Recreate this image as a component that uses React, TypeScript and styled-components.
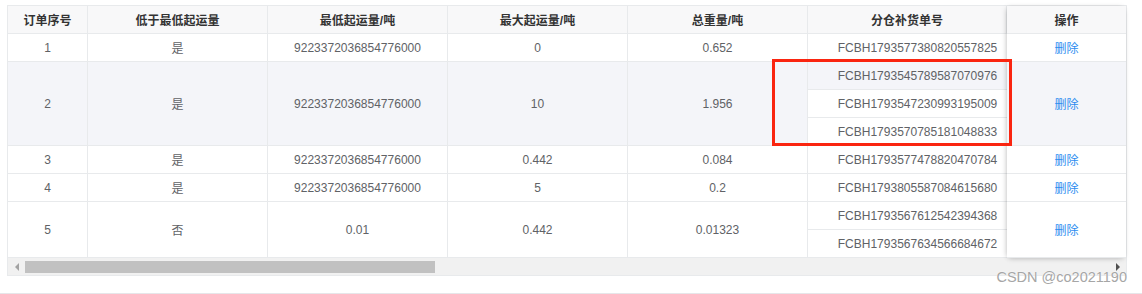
import React from "react";
import styled, { createGlobalStyle } from "styled-components";

const GlobalStyle = createGlobalStyle`
  body {
    margin: 0;
    background: #fff;
    font-family: "Liberation Sans", Arial, "Noto Sans CJK SC", sans-serif;
  }
`;

type Order = {
  no: string;
  below: string;
  min: string;
  max: string;
  total: string;
  subs: string[];
  hover?: boolean;
};

const ROW = 28;
const COLS = [80, 180, 180, 180, 180, 199];
const HEADS = ["订单序号", "低于最低起运量", "最低起运量/吨", "最大起运量/吨", "总重量/吨", "分仓补货单号"];

const orders: Order[] = [
  { no: "1", below: "是", min: "9223372036854776000", max: "0", total: "0.652", subs: ["FCBH1793577380820557825"] },
  {
    no: "2", below: "是", min: "9223372036854776000", max: "10", total: "1.956", hover: true,
    subs: ["FCBH1793545789587070976", "FCBH1793547230993195009", "FCBH1793570785181048833"],
  },
  { no: "3", below: "是", min: "9223372036854776000", max: "0.442", total: "0.084", subs: ["FCBH1793577478820470784"] },
  { no: "4", below: "是", min: "9223372036854776000", max: "5", total: "0.2", subs: ["FCBH1793805587084615680"] },
  {
    no: "5", below: "否", min: "0.01", max: "0.442", total: "0.01323",
    subs: ["FCBH1793567612542394368", "FCBH1793567634566684672"],
  },
];

const App: React.FC = () => {
  return <>
    <GlobalStyle />
    <Page>
      <Frame>
        <Body>
          <Scroller>
            <Row $height={ROW} $head>
              {HEADS.map((h, i) => (
                <Cell key={h} $width={COLS[i]} $head>{h}</Cell>
              ))}
            </Row>
            {orders.map((o) => (
              <Row key={o.no} $height={ROW * o.subs.length} $hover={o.hover}>
                <Cell $width={COLS[0]}>{o.no}</Cell>
                <Cell $width={COLS[1]}>{o.below}</Cell>
                <Cell $width={COLS[2]}>{o.min}</Cell>
                <Cell $width={COLS[3]}>{o.max}</Cell>
                <Cell $width={COLS[4]}>{o.total}</Cell>
                <SubCell $width={COLS[5]}>
                  {o.subs.map((s, i) => (
                    <SubRow key={s} $last={i === o.subs.length - 1} $hover={o.hover && i === 0}>{s}</SubRow>
                  ))}
                </SubCell>
              </Row>
            ))}
          </Scroller>
          <FixedCol>
            <Row $height={ROW} $head>
              <Cell $width={119} $head $noRight>操作</Cell>
            </Row>
            {orders.map((o) => (
              <Row key={o.no} $height={ROW * o.subs.length} $hover={o.hover}>
                <Cell $width={119} $noRight><Action>删除</Action></Cell>
              </Row>
            ))}
          </FixedCol>
        </Body>
        <ScrollBar>
          <Arrow $dir="left" />
          <Track>
            <Thumb />
          </Track>
          <Arrow $dir="right" />
        </ScrollBar>
        <Highlight />
      </Frame>
      <Watermark>CSDN @co2021190</Watermark>
    </Page>
  </>
}

const Page = styled.div`
  position: relative;
  box-sizing: border-box;
  height: 294px;
  padding: 5px 0 0 7px;
  border-bottom: 1px solid #e6e6e9;
`;

const Frame = styled.div`
  position: relative;
  width: 1118px;
  border: 1px solid #e8eaec;
  font-size: 12px;
  color: #606266;
`;

const Body = styled.div`
  display: flex;
`;

const Scroller = styled.div`
  flex: 1;
  overflow: hidden;
`;

const FixedCol = styled.div`
  position: relative;
  z-index: 2;
  width: 119px;
  background: #fff;
  box-shadow: -2px 0 6px -2px rgba(0, 0, 0, 0.2), 0 2px 6px -2px rgba(0, 0, 0, 0.2);
`;

const Row = styled.div<{ $height: number; $head?: boolean; $hover?: boolean }>`
  display: flex;
  height: ${(p) => p.$height}px;
  background: ${(p) => (p.$head ? "#f8f8f9" : p.$hover ? "#f4f5f9" : "#fff")};
`;

const Cell = styled.div<{ $width: number; $head?: boolean; $noRight?: boolean }>`
  box-sizing: border-box;
  flex: 0 0 ${(p) => p.$width}px;
  display: flex;
  align-items: center;
  justify-content: center;
  border-bottom: 1px solid #e8eaec;
  border-right: ${(p) => (p.$noRight ? "none" : "1px solid #e8eaec")};
  color: ${(p) => (p.$head ? "#333" : "#606266")};
  font-weight: ${(p) => (p.$head ? 700 : 400)};
  white-space: nowrap;
`;

const SubCell = styled.div<{ $width: number }>`
  box-sizing: border-box;
  flex: 0 0 ${(p) => p.$width}px;
  display: flex;
  flex-direction: column;
  border-bottom: 1px solid #e8eaec;
`;

const SubRow = styled.div<{ $last?: boolean; $hover?: boolean }>`
  box-sizing: border-box;
  flex: 1;
  display: flex;
  align-items: center;
  justify-content: center;
  padding-left: 20px;
  background: ${(p) => (p.$hover ? "#f4f5f9" : "#fff")};
  border-bottom: ${(p) => (p.$last ? "none" : "1px solid #e8eaec")};
  white-space: nowrap;
`;

const Action = styled.span`
  color: #2d8cf0;
  cursor: pointer;
`;

const ScrollBar = styled.div`
  display: flex;
  align-items: center;
  height: 17px;
  background: #f1f1f1;
`;

const Arrow = styled.div<{ $dir: "left" | "right" }>`
  flex: 0 0 17px;
  height: 17px;
  display: flex;
  align-items: center;
  justify-content: center;

  &::before {
    content: "";
    width: 0;
    height: 0;
    border-top: 4px solid transparent;
    border-bottom: 4px solid transparent;
    ${(p) =>
      p.$dir === "left"
        ? "border-right: 4px solid #a3a3a3;"
        : "border-left: 4px solid #505050;"}
  }
`;

const Track = styled.div`
  flex: 1;
  height: 17px;
  display: flex;
  align-items: center;
`;

const Thumb = styled.div`
  width: 410px;
  height: 12px;
  background: #c1c1c1;
`;

const Highlight = styled.div`
  position: absolute;
  left: 764px;
  top: 53px;
  width: 240px;
  height: 87px;
  box-sizing: border-box;
  border: 3px solid #fa2510;
  pointer-events: none;
  z-index: 3;
`;

const Watermark = styled.div`
  position: absolute;
  right: 15px;
  top: 269px;
  font-size: 14.5px;
  color: #a6a6a6;
  text-shadow: 0 0 1px #fff, 0 0 1px #fff;
  font-family: "Liberation Sans", Arial, sans-serif;
`;

export default App;
